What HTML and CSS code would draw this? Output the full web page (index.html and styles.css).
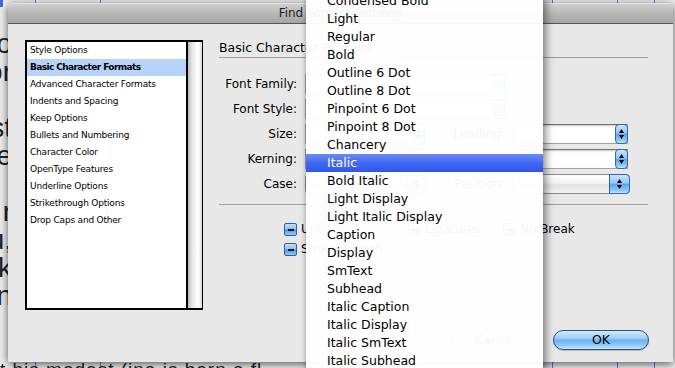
FILE: index.html
```html
<!DOCTYPE html>
<html>
<head>
<meta charset="utf-8">
<title>Find Format Settings</title>
<link rel="stylesheet" href="styles.css">
</head>
<body>
<div class="doc-left">
  <div>o</div><div>or</div><div>&nbsp;</div><div>st</div><div>e</div><div>&nbsp;</div><div>r</div><div>u,</div><div>k</div><div>n</div>
</div>
<div class="doc-bottom">t his modest (ina is born a fl</div>

<div class="window">
  <div class="titlebar">Find Format Settings</div>
  <div class="wbody">
    <div class="listbox">
      <ul class="items">
        <li>Style Options</li>
        <li class="sel">Basic Character Formats</li>
        <li>Advanced Character Formats</li>
        <li>Indents and Spacing</li>
        <li>Keep Options</li>
        <li>Bullets and Numbering</li>
        <li>Character Color</li>
        <li>OpenType Features</li>
        <li>Underline Options</li>
        <li>Strikethrough Options</li>
        <li>Drop Caps and Other</li>
      </ul>
      <div class="scroll"></div>
    </div>

    <div class="pane">
      <div class="heading">Basic Character Formats</div>
      <div class="form">
        <div class="lbl first">Font Family:</div>
        <div class="field span"><span class="combo-btn"></span></div>
        <div class="lbl first">Font Style:</div>
        <div class="field span"><span class="combo-btn"></span></div>

        <div class="lbl first">Size:</div>
        <div class="field"><span class="stepper"><svg width="13" height="20" viewBox="0 0 13 20"><path d="M6.5 5 L9 9 L4 9 Z M4 11 L9 11 L6.5 15 Z" fill="#000"/></svg></span></div>
        <div class="lbl">Leading:</div>
        <div class="field"><span class="stepper"><svg width="13" height="20" viewBox="0 0 13 20"><path d="M6.5 5 L9 9 L4 9 Z M4 11 L9 11 L6.5 15 Z" fill="#000"/></svg></span></div>

        <div class="lbl first">Kerning:</div>
        <div class="field"><span class="stepper"><svg width="13" height="20" viewBox="0 0 13 20"><path d="M6.5 5 L9 9 L4 9 Z M4 11 L9 11 L6.5 15 Z" fill="#000"/></svg></span></div>
        <div class="lbl">Tracking:</div>
        <div class="field"><span class="stepper"><svg width="13" height="20" viewBox="0 0 13 20"><path d="M6.5 5 L9 9 L4 9 Z M4 11 L9 11 L6.5 15 Z" fill="#000"/></svg></span></div>

        <div class="lbl first">Case:</div>
        <div class="popup"><span class="popup-btn"><svg width="21" height="20" viewBox="0 0 21 20"><path d="M10.5 5 L13 9 L8 9 Z M8 11 L13 11 L10.5 15 Z" fill="#000"/></svg></span></div>
        <div class="lbl">Position:</div>
        <div class="popup"><span class="popup-btn"><svg width="21" height="20" viewBox="0 0 21 20"><path d="M10.5 5 L13 9 L8 9 Z M8 11 L13 11 L10.5 15 Z" fill="#000"/></svg></span></div>
      </div>

      <div class="sep"></div>

      <div class="checks">
        <div class="chk"><span class="box"><span class="dash"></span></span>Underline</div>
        <div class="chk"><span class="box"><span class="dash"></span></span>Ligatures</div>
        <div class="chk"><span class="box"><span class="dash"></span></span>No Break</div>
        <div class="chk"><span class="box"><span class="dash"></span></span>Strikethrough</div>
      </div>

      <div class="buttons">
        <div class="btn cancel">Cancel</div>
        <div class="btn ok">OK</div>
      </div>
    </div>
  </div>
</div>

<ul class="menu">
  <li>Condensed Bold</li>
  <li>Light</li>
  <li>Regular</li>
  <li>Bold</li>
  <li>Outline 6 Dot</li>
  <li>Outline 8 Dot</li>
  <li>Pinpoint 6 Dot</li>
  <li>Pinpoint 8 Dot</li>
  <li>Chancery</li>
  <li class="sel">Italic</li>
  <li>Bold Italic</li>
  <li>Light Display</li>
  <li>Light Italic Display</li>
  <li>Caption</li>
  <li>Display</li>
  <li>SmText</li>
  <li>Subhead</li>
  <li>Italic Caption</li>
  <li>Italic Display</li>
  <li>Italic SmText</li>
  <li>Italic Subhead</li>
</ul>
</body>
</html>
```

FILE: styles.css
```css
* { box-sizing: border-box; }

html, body {
  margin: 0;
  height: 368px;
  overflow: hidden;
}

body {
  position: relative;
  padding: 3px 0 0 8px;
  font-family: "DejaVu Sans", sans-serif;
  color: #000;
  background:
    linear-gradient(#3b6fd6, #3b6fd6) no-repeat 0 0 / 3px 7px,
    linear-gradient(to right, transparent 35px, #9a5ae0 35px, #9a5ae0 36px, transparent 36px),
    linear-gradient(to right, transparent 100px, #9a5ae0 100px, #9a5ae0 101px, transparent 101px),
    linear-gradient(to right, transparent 552px, #9a5ae0 552px, #9a5ae0 553px, transparent 553px),
    linear-gradient(to right, transparent 617px, #9a5ae0 617px, #9a5ae0 618px, transparent 618px),
    linear-gradient(to right, transparent 654px, #9a5ae0 654px, #9a5ae0 655px, transparent 655px),
    #ededed;
}

/* document behind the dialog */
.doc-left {
  position: absolute;
  left: -20px;
  top: 30px;
  width: 32px;
  font-family: "Liberation Sans", sans-serif;
  font-size: 28px;
  line-height: 28px;
  text-align: right;
  color: #222;
}

.doc-bottom {
  position: absolute;
  left: 0;
  top: 359px;
  font-family: "Liberation Sans", sans-serif;
  font-size: 19px;
  letter-spacing: 1px;
  white-space: nowrap;
  color: #222;
}

/* window */
.window {
  position: relative;
  width: 665px;
  height: 359px;
  border-radius: 5px 5px 0 0;
  background: #e8e8e8;
  box-shadow: 0 2px 9px rgba(0, 0, 0, 0.65);
  display: flex;
  flex-direction: column;
  overflow: hidden;
}

.titlebar {
  height: 21px;
  flex: none;
  border-bottom: 1px solid #555;
  background: linear-gradient(#d2d2d2, #b8b8b8 50%, #a6a6a6);
  box-shadow: inset 0 1px 0 #e4e4e4;
  text-align: center;
  font-size: 12px;
  line-height: 20px;
  color: #1c1c1c;
}

.wbody {
  flex: 1;
  display: flex;
  gap: 16px;
  padding: 16px 0 12px 17px;
}

/* list box */
.listbox {
  flex: none;
  width: 178px;
  height: 270px;
  border: 2px solid #000;
  border-right-width: 1px;
  display: flex;
  background: #fff;
}

.items {
  flex: 1;
  margin: 0;
  padding: 0;
  list-style: none;
  font-size: 9px;
  letter-spacing: -0.2px;
}

.items li {
  height: 17px;
  line-height: 17px;
  padding-left: 3px;
  white-space: nowrap;
}

.items li.sel {
  background: #b7d3f9;
  font-weight: bold;
  letter-spacing: -0.6px;
}

.scroll {
  flex: none;
  width: 16px;
  border-left: 2px solid #000;
  background: linear-gradient(to right, #bdbdbd, #ececec 35%, #fff 75%, #d8d8d8);
}

/* right pane */
.pane {
  width: 429px;
  display: flex;
  flex-direction: column;
}

.heading {
  height: 18px;
  line-height: 16px;
  font-size: 12.5px;
  border-bottom: 1px solid #9c9c9c;
  white-space: nowrap;
}

.form {
  margin-top: 16px;
  display: grid;
  grid-template-columns: 78px 120px 72px 115px;
  grid-auto-rows: 20px;
  column-gap: 8px;
  row-gap: 5px;
}

.lbl {
  text-align: right;
  font-size: 12px;
  line-height: 20px;
  white-space: nowrap;
}

.lbl.first {
  grid-column: 1;
}

.field {
  display: flex;
  justify-content: flex-end;
  background: #fff;
  border: 1px solid #a3a3a3;
  border-top-color: #6f6f6f;
  box-shadow: inset 0 1px 2px rgba(0, 0, 0, 0.22);
}

.field.span {
  grid-column: 2 / 4;
}

.stepper,
.combo-btn {
  display: block;
  width: 13px;
  margin: -1px -1px -1px 0;
  border: 1px solid #3f62a0;
  border-radius: 4px;
  background: linear-gradient(#cbe5fc, #92c7f4 45%, #5ba5ee 52%, #87c9fa 85%, #bfe7ff);
}

.stepper svg {
  display: block;
  margin: -1px 0 0 -1px;
}

.combo-btn {
  width: 12px;
}

.popup {
  display: flex;
  justify-content: flex-end;
  border: 1px solid #8a8a8a;
  border-radius: 4px;
  background: linear-gradient(#ffffff, #f1f1f1 45%, #e2e2e2 55%, #f4f4f4);
  margin-right: -2px;
}

.popup-btn {
  display: block;
  width: 21px;
  margin: -1px -1px -1px 0;
  border: 1px solid #3f62a0;
  border-radius: 0 4px 4px 0;
  background: linear-gradient(#cbe5fc, #92c7f4 45%, #5ba5ee 52%, #87c9fa 85%, #bfe7ff);
}

.popup-btn svg {
  display: block;
  margin: -1px 0 0 -1px;
}

.sep {
  margin-top: 10px;
  height: 1px;
  background: #9c9c9c;
}

.checks {
  margin: 18px 0 0 65px;
  display: grid;
  grid-template-columns: 124px 95px auto;
  grid-auto-rows: 20px;
  font-size: 12px;
}

.chk {
  display: flex;
  align-items: flex-start;
  line-height: 13px;
  white-space: nowrap;
}

.box {
  flex: none;
  width: 13px;
  height: 13px;
  margin-right: 4px;
  border: 1px solid #3a5c94;
  border-radius: 2px;
  background: linear-gradient(#c3e0fb, #8ac2f3 45%, #4f9aea 55%, #8dcbfa);
  display: flex;
  align-items: center;
  justify-content: center;
}

.dash {
  width: 6px;
  height: 2px;
  background: #111;
}

.buttons {
  margin-top: auto;
  display: flex;
  justify-content: flex-end;
  gap: 12px;
}

.btn {
  height: 20px;
  border-radius: 10px;
  font-size: 12.5px;
  line-height: 18px;
  text-align: center;
}

.cancel {
  width: 90px;
  border: 1px solid #8c8c8c;
  background: linear-gradient(#ffffff, #f2f2f2 45%, #e3e3e3 55%, #f7f7f7);
}

.ok {
  width: 96px;
  margin-right: -1px;
  border: 1px solid #2c4c85;
  background: linear-gradient(#d2e9fd, #9fcdf6 40%, #6db1f0 52%, #8fcbf9 80%, #c4ecff);
  box-shadow: 0 1px 1px rgba(0, 0, 0, 0.2);
}

/* pop-up menu over the dialog */
.menu {
  position: absolute;
  left: 306px;
  top: -8px;
  width: 237px;
  margin: 0;
  padding: 0;
  list-style: none;
  background: rgba(255, 255, 255, 0.96);
  box-shadow: 3px 4px 8px rgba(0, 0, 0, 0.45), -1px 0 3px rgba(0, 0, 0, 0.15);
  font-size: 12.5px;
}

.menu li {
  height: 18px;
  line-height: 18px;
  padding-left: 21px;
  white-space: nowrap;
}

.menu li.sel {
  color: #fff;
  background: linear-gradient(#6a8cf6, #4368f2 50%, #2f55ea);
}
```
